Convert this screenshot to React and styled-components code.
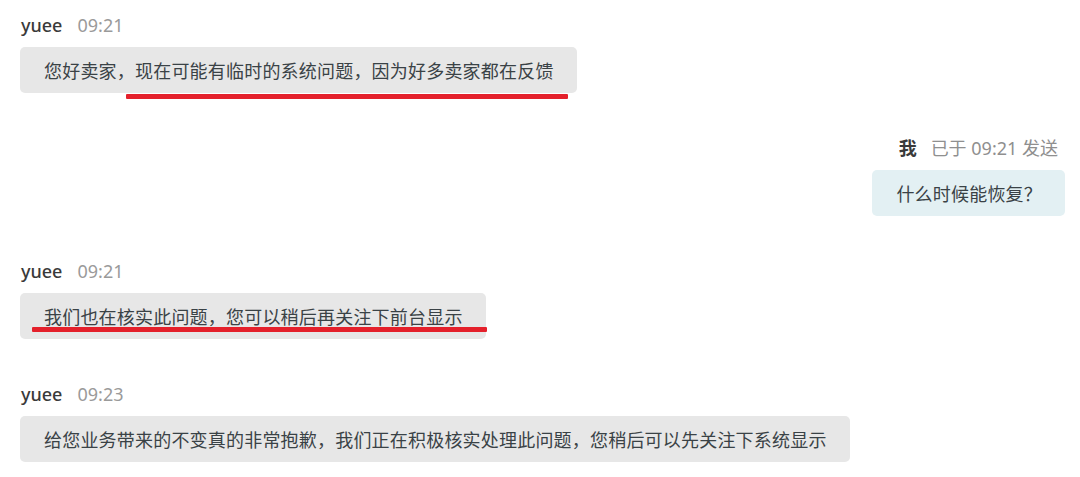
import React from "react";
import styled, { createGlobalStyle } from "styled-components";

const Global = createGlobalStyle`
  html, body { margin: 0; padding: 0; background: #ffffff; }
  body { font-family: "Noto Sans", "Noto Sans CJK SC", sans-serif; }
`;

const Chat = styled.div`
  width: 1080px;
  height: 477px;
  box-sizing: border-box;
  padding: 13px 15px 0 20px;
  display: flex;
  flex-direction: column;
  gap: 43px;
  overflow: hidden;
`;

const Group = styled.div`
  display: flex;
  flex-direction: column;
  align-items: ${(p) => (p.$mine ? "flex-end" : "flex-start")};
  gap: 10px;
`;

const Header = styled.div`
  display: flex;
  align-items: baseline;
  height: 24px;
  line-height: 24px;
  font-size: 18px;
  padding: ${(p) => (p.$mine ? "0 7px 0 0" : "0 0 0 1px")};
  gap: ${(p) => (p.$mine ? "14px" : "15px")};
`;

const Name = styled.span`
  color: #3a3a3a;
  font-weight: ${(p) => (p.$mine ? 700 : 500)};
`;

const Time = styled.span`
  color: ${(p) => (p.$mine ? "#8f8f8f" : "#9a9a9a")};
`;

const Bubble = styled.div`
  position: relative;
  box-sizing: border-box;
  height: 46px;
  padding: 11px 23px 11px 24px;
  line-height: 24px;
  font-size: 18px;
  letter-spacing: 0.2px;
  color: #3a4246;
  border-radius: 5px;
  background: ${(p) => (p.$mine ? "#e3f0f3" : "#e7e7e7")};
  font-family: "Noto Sans CJK SC", "Noto Sans", sans-serif;
  white-space: nowrap;
`;

const Underline = styled.span`
  position: absolute;
  height: 5px;
  background: #e4202b;
  border-radius: 1px;
  left: ${(p) => p.$left}px;
  top: ${(p) => p.$top}px;
  width: ${(p) => p.$width}px;
`;

const messages = [
  {
    name: "yuee",
    time: "09:21",
    text: "您好卖家，现在可能有临时的系统问题，因为好多卖家都在反馈",
    line: { left: 106, top: 47, width: 442 },
  },
  {
    mine: true,
    name: "我",
    time: "已于 09:21 发送",
    text: "什么时候能恢复？",
  },
  {
    name: "yuee",
    time: "09:21",
    text: "我们也在核实此问题，您可以稍后再关注下前台显示",
    line: { left: 12, top: 34, width: 455 },
  },
  {
    name: "yuee",
    time: "09:23",
    text: "给您业务带来的不变真的非常抱歉，我们正在积极核实处理此问题，您稍后可以先关注下系统显示",
  },
];

export default function App() {
  return (
    <>
      <Global />
      <Chat>
        {messages.map((m, i) => (
          <Group key={i} $mine={m.mine}>
            <Header $mine={m.mine}>
              <Name $mine={m.mine}>{m.name}</Name>
              <Time $mine={m.mine}>{m.time}</Time>
            </Header>
            <Bubble $mine={m.mine}>
              {m.text}
              {m.line && (
                <Underline
                  $left={m.line.left}
                  $top={m.line.top}
                  $width={m.line.width}
                />
              )}
            </Bubble>
          </Group>
        ))}
      </Chat>
    </>
  );
}
